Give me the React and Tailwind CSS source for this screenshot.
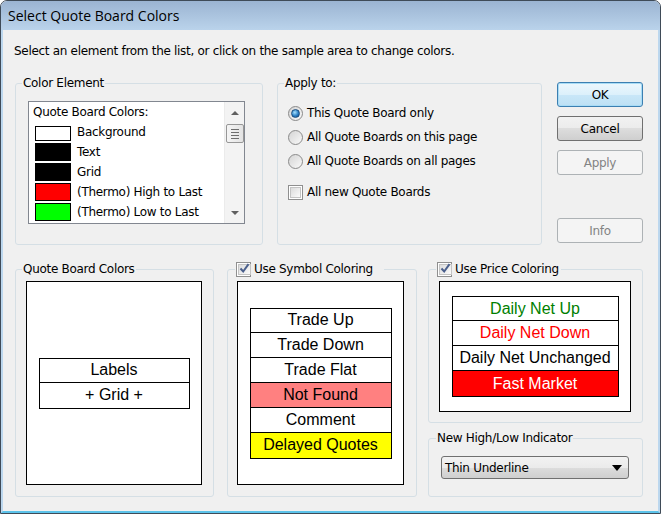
import React from 'react';

const Radio = ({ checked }) => (
  <span className="w-[15px] h-[15px] rounded-full border border-[#8a8a8a] bg-[linear-gradient(135deg,#d4d4d4,#f9f9f9)] flex items-center justify-center shrink-0">
    {checked && (
      <span className="w-[9px] h-[9px] rounded-full border border-[#1d4f80] bg-[radial-gradient(circle_at_40%_35%,#a6e1ff,#2b7fc4_55%,#0f4a86)]" />
    )}
  </span>
);

const Check = ({ checked }) => (
  <span className="w-[15px] h-[15px] border border-[#8f8f8f] bg-white p-[1px] flex shrink-0">
    <span className="flex-1 border border-[#c4c4c4] bg-[linear-gradient(135deg,#dcdcdc,#fbfbfb)] flex items-center justify-center">
      {checked && (
        <svg width="11" height="11" viewBox="0 0 11 11" className="-mt-[1px]">
          <path d="M1.5 5.5 L4.2 8.5 L9.5 1.2" stroke="#4a5f8c" strokeWidth="2" fill="none" />
        </svg>
      )}
    </span>
  </span>
);

const Group = ({ legend, className = '', legendClass = 'ml-[6px] px-[1px]', children }) => (
  <fieldset className={`border border-[#d5dfe5] rounded-[3px] shrink-0 ${className}`}>
    <legend className={`h-[14px] leading-[14px] ${legendClass}`}>
      <span className="inline-flex items-center h-[14px]">{legend}</span>
    </legend>
    {children}
  </fieldset>
);

const Button = ({ label, primary, disabled, className = '' }) => {
  let look = 'border-[#707070] bg-[linear-gradient(#f2f2f2,#ebebeb_50%,#dddddd_50%,#cfcfcf)] text-black';
  if (primary) look = 'border-[#3c7fb1] bg-[linear-gradient(#ecf7fd,#dcf0fb_50%,#c9e7f8_50%,#bde0f4)] text-black shadow-[inset_0_0_0_1px_#a8dcf6]';
  if (disabled) look = 'border-[#adb2b5] bg-[#f4f4f4] text-[#838383]';
  return (
    <div className={`h-[25px] w-[86px] border rounded-[3px] flex items-center justify-center ${look} ${className}`}>
      {label}
    </div>
  );
};

const swatches = [
  { label: 'Background', color: 'bg-white', short: true },
  { label: 'Text', color: 'bg-black' },
  { label: 'Grid', color: 'bg-black' },
  { label: '(Thermo) High to Last', color: 'bg-[#ff0000]' },
  { label: '(Thermo) Low to Last', color: 'bg-[#00ff00]' },
];

const symbolRows = [
  { label: 'Trade Up', cls: 'bg-white' },
  { label: 'Trade Down', cls: 'bg-white' },
  { label: 'Trade Flat', cls: 'bg-white' },
  { label: 'Not Found', cls: 'bg-[#ff8080]' },
  { label: 'Comment', cls: 'bg-white' },
  { label: 'Delayed Quotes', cls: 'bg-[#ffff00]' },
];

const priceRows = [
  { label: 'Daily Net Up', cls: 'bg-white text-[#008000]', strip: true },
  { label: 'Daily Net Down', cls: 'bg-white text-[#ff0000]', strip: true },
  { label: 'Daily Net Unchanged', cls: 'bg-white text-black', strip: true },
  { label: 'Fast Market', cls: 'bg-[#ff0000] text-white' },
];

// rows carry their own top divider, so the first one is a pixel shorter
const rowCls = 'h-[25px] first:h-[24px]';

export default function App() {
  return (
    <div className="w-[661px] h-[514px] flex flex-col bg-[#f0f0f0] border border-[#3f4b58] rounded-t-[7px] overflow-hidden font-['DejaVu_Sans',sans-serif] text-[12px] tracking-[-0.3px] text-black">
      {/* title bar */}
      <div className="h-[29px] shrink-0 bg-[linear-gradient(#9bb4d2,#bad3eb)] flex items-center pl-[7px] font-['Open_Sans',sans-serif] text-[14px] tracking-normal">
        Select Quote Board Colors
      </div>

      <div className="flex-1 flex flex-col border-x-2 border-b-2 border-x-[#bcd7ee] border-b-[#5cc3ea]">
        <div className="pt-[14px] pl-[11px] leading-[15px]">
          Select an element from the list, or click on the sample area to change colors.
        </div>

        {/* top row */}
        <div className="flex mt-[17px] pl-[12px]">
          <Group legend="Color Element" className="w-[248px] h-[169px]">
            <div className="ml-[12px] mt-[11px] w-[217px] h-[123px] border border-[#828790] bg-white flex">
              <div className="flex-1 flex flex-col pl-[4px]">
                <div className="h-[20px] flex items-center">Quote Board Colors:</div>
                {swatches.map((s) => (
                  <div key={s.label} className="h-[20px] flex items-end">
                    <div className={`ml-[2px] mb-[1px] w-[36px] ${s.short ? 'h-[15px]' : 'h-[18px]'} border border-black ${s.color}`} />
                    <span className="ml-[6px] self-center">{s.label}</span>
                  </div>
                ))}
              </div>
              <div className="w-[20px] bg-[#f3f3f3] border-l border-[#ebebeb] flex flex-col items-center">
                <div className="h-[20px] flex items-center">
                  <svg width="8" height="5" viewBox="0 0 8 5"><path d="M0 5 L4 1 L8 5 Z" fill="#606060" /></svg>
                </div>
                <div className="w-[18px] h-[19px] mt-[2px] border border-[#979797] rounded-[2px] bg-[linear-gradient(90deg,#f5f5f5,#e3e3e3)] flex flex-col items-center justify-center gap-[2px]">
                  <span className="w-[8px] h-[1px] bg-[#6e6e6e]" />
                  <span className="w-[8px] h-[1px] bg-[#6e6e6e]" />
                  <span className="w-[8px] h-[1px] bg-[#6e6e6e]" />
                  <span className="w-[8px] h-[1px] bg-[#6e6e6e]" />
                </div>
                <div className="flex-1" />
                <div className="h-[20px] flex items-center">
                  <svg width="8" height="5" viewBox="0 0 8 5"><path d="M0 0 L4 4 L8 0 Z" fill="#606060" /></svg>
                </div>
              </div>
            </div>
          </Group>

          <Group legend="Apply to:" className="ml-[14px] w-[265px] h-[169px]">
            <div className="flex flex-col mt-[11px] ml-[10px]">
              {['This Quote Board only', 'All Quote Boards on this page', 'All Quote Boards on all pages'].map((t, i) => (
                <div key={t} className="h-[24px] flex items-center gap-[4px]">
                  <Radio checked={i === 0} />
                  <span>{t}</span>
                </div>
              ))}
              <div className="h-[24px] mt-[7px] flex items-center gap-[4px]">
                <Check />
                <span>All new Quote Boards</span>
              </div>
            </div>
          </Group>

          <div className="ml-[15px] flex flex-col pt-[6px]">
            <Button label="OK" primary />
            <Button label="Cancel" className="mt-[9px]" />
            <Button label="Apply" disabled className="mt-[9px]" />
            <Button label="Info" disabled className="mt-[43px]" />
          </div>
        </div>

        {/* bottom row */}
        <div className="flex mt-[17px] pl-[12px]">
          <Group legend="Quote Board Colors" className="w-[199px] h-[235px]">
            <div className="ml-[10px] mt-[5px] w-[176px] h-[204px] border border-black bg-white flex items-center justify-center">
              <div className="w-[151px] border border-black divide-y divide-black font-['Liberation_Sans',sans-serif] text-[16px] tracking-normal">
                <div className={`${rowCls} flex items-center justify-center`}>Labels</div>
                <div className={`${rowCls} flex items-center justify-center`}>+ Grid +</div>
              </div>
            </div>
          </Group>

          <Group
            legend={<><Check checked /><span className="ml-[3px]">Use Symbol Coloring</span></>}
            legendClass="ml-[7px] pl-[1px] pr-[11px]"
            className="ml-[13px] w-[190px] h-[235px]"
          >
            <div className="ml-[9px] mt-[5px] w-[167px] h-[204px] border border-black bg-white flex items-center justify-center">
              <div className="w-[142px] border border-black divide-y divide-black font-['Liberation_Sans',sans-serif] text-[16px] tracking-normal">
                {symbolRows.map((r) => (
                  <div key={r.label} className={`${rowCls} flex items-center justify-center ${r.cls}`}>{r.label}</div>
                ))}
              </div>
            </div>
          </Group>

          <div className="ml-[11px] flex flex-col">
            <Group
              legend={<><Check checked /><span className="ml-[3px]">Use Price Coloring</span></>}
              legendClass="ml-[7px] pl-[1px] pr-[2px]"
              className="w-[215px] h-[161px]"
            >
              <div className="ml-[10px] mt-[5px] w-[192px] h-[131px] border border-black bg-white flex items-center justify-center">
                <div className="w-[167px] border border-black divide-y divide-black font-['Liberation_Sans',sans-serif] text-[16px] tracking-normal">
                  {priceRows.map((r) => (
                    <div key={r.label} className={`${rowCls} flex flex-col ${r.cls}`}>
                      <div className="flex-1 flex items-center justify-center">{r.label}</div>
                      {r.strip && (
                        <div className="h-[2px] flex">
                          <span className="flex-1 bg-[#1fd11f]" />
                          <span className="flex-1 bg-[#ff0000]" />
                        </div>
                      )}
                    </div>
                  ))}
                </div>
              </div>
            </Group>

            <Group legend="New High/Low Indicator" legendClass="ml-[7px] px-[1px]" className="mt-[8px] w-[215px] h-[66px]">
              <div className="ml-[12px] mt-[11px] w-[188px] h-[23px] border border-[#707070] rounded-[3px] bg-[linear-gradient(#f2f2f2,#ebebeb_50%,#dddddd_50%,#cfcfcf)] flex items-center pl-[3px] pr-[6px]">
                <span className="flex-1">Thin Underline</span>
                <svg width="10" height="6" viewBox="0 0 10 6"><path d="M0 0 L10 0 L5 6 Z" fill="#000" /></svg>
              </div>
            </Group>
          </div>
        </div>
      </div>
    </div>
  );
}
